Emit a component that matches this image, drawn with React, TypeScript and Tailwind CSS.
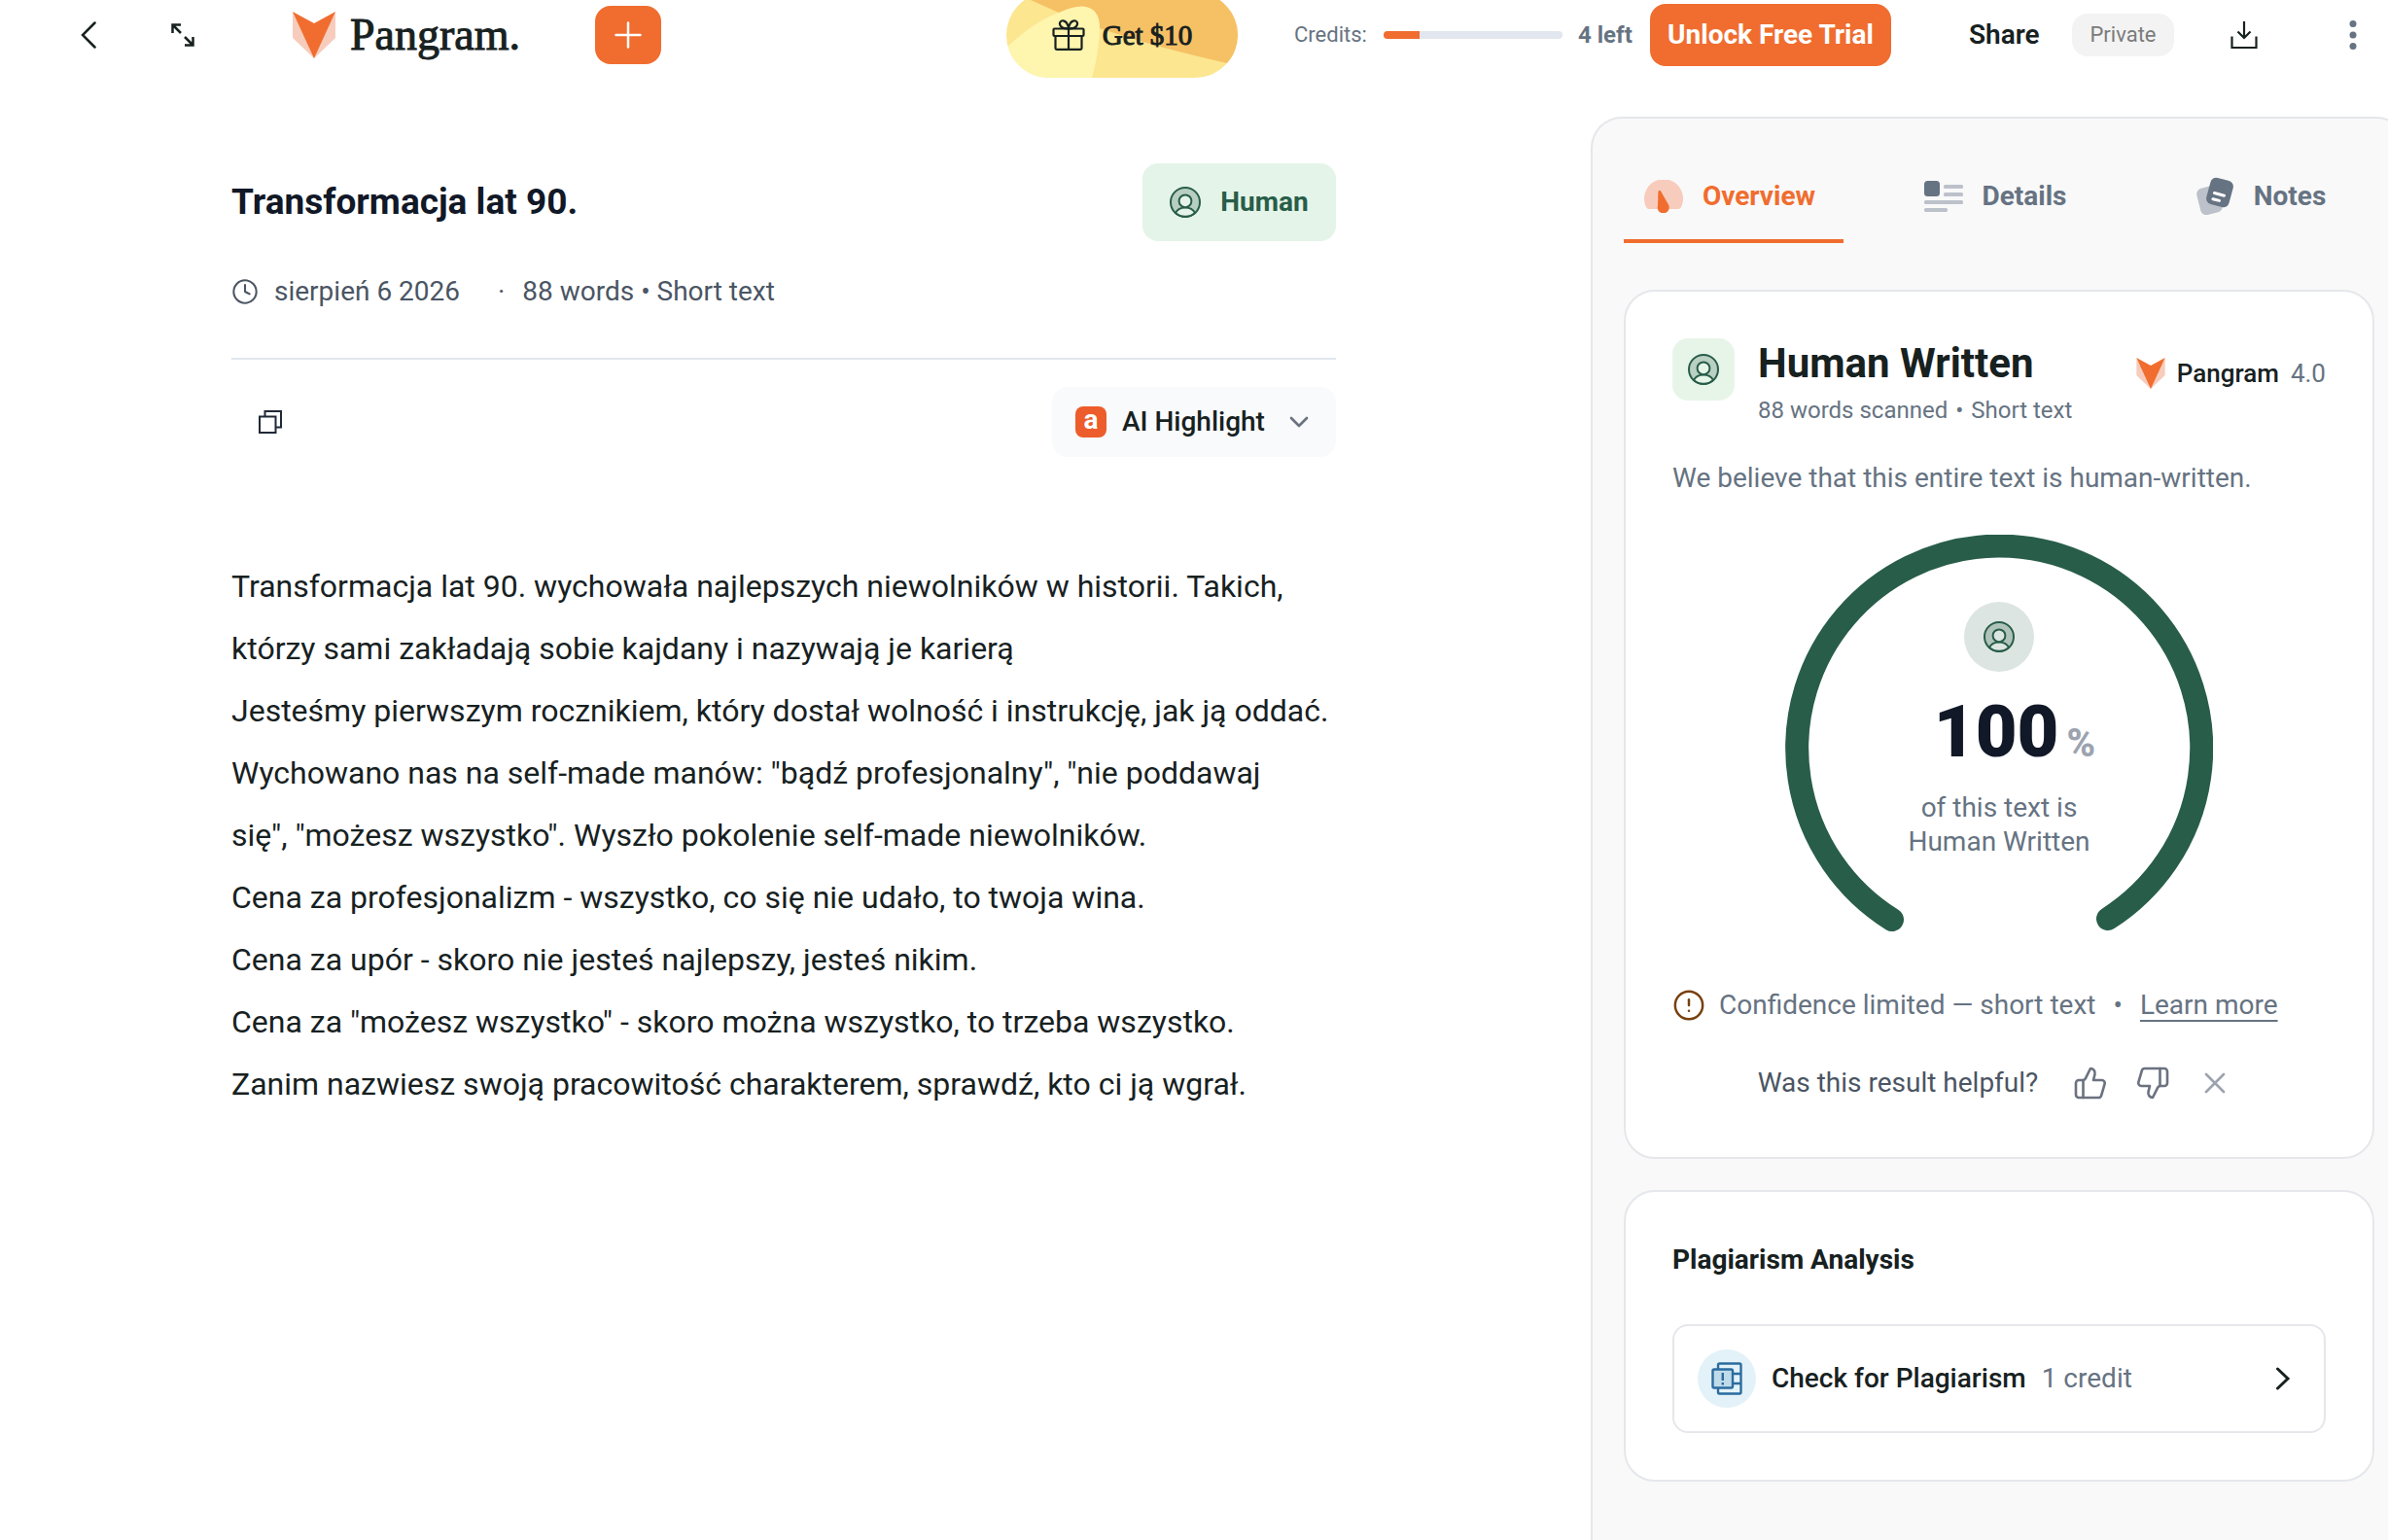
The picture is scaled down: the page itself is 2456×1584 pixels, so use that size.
/**
 * Scan result page: top bar, analysed document on the left,
 * detection report panel on the right.
 */
import type { ReactNode } from 'react'
import { ChevronDown, CircleAlert, Clock, ThumbsDown, ThumbsUp, X } from 'lucide-react'

const DOCUMENT_LINES = [
  'Transformacja lat 90. wychowała najlepszych niewolników w historii. Takich,',
  'którzy sami zakładają sobie kajdany i nazywają je karierą',
  'Jesteśmy pierwszym rocznikiem, który dostał wolność i instrukcję, jak ją oddać.',
  'Wychowano nas na self-made manów: "bądź profesjonalny", "nie poddawaj',
  'się", "możesz wszystko". Wyszło pokolenie self-made niewolników.',
  'Cena za profesjonalizm - wszystko, co się nie udało, to twoja wina.',
  'Cena za upór - skoro nie jesteś najlepszy, jesteś nikim.',
  'Cena za "możesz wszystko" - skoro można wszystko, to trzeba wszystko.',
  'Zanim nazwiesz swoją pracowitość charakterem, sprawdź, kto ci ją wgrał.',
]

function FoxLogo({ className }: { className?: string }) {
  return (
    <svg viewBox="0 0 44 48" className={className} aria-hidden="true">
      <path d="M0 0V27L22 48L44 27V0L22 40Z" fill="#f7ccbc" />
      <path d="M0 0L22 12L44 0L22 48Z" fill="#f06d2f" />
    </svg>
  )
}

/** Person in a circle. `ground` is the colour behind it, used for head and shoulders. */
function HumanIcon({ ground }: { ground: string }) {
  return (
    <svg viewBox="0 0 32 32" className="size-8 shrink-0" fill="none" stroke="#285d49" strokeWidth="2" aria-hidden="true">
      <circle cx="16" cy="16" r="15" fill="#285d49" fillOpacity="0.24" />
      <path d="M6 27C8 23 12 21.4 16 21.4S24 23 26 27A15 15 0 0 1 6 27Z" fill={ground} />
      <circle cx="16" cy="14.8" r="6.4" fill={ground} />
    </svg>
  )
}

function GiftIcon() {
  return (
    <svg viewBox="0 0 34 32" className="h-8 w-[34px]" fill="none" stroke="#17211f" strokeWidth="2.2" strokeLinejoin="round" strokeLinecap="round" aria-hidden="true">
      <rect x="1.5" y="9.5" width="31" height="7.5" rx="1" />
      <path d="M3.5 17V29.5Q3.5 30.8 4.8 30.8H29.2Q30.5 30.8 30.5 29.5V17M17 9.5V30.8" />
      <path d="M17 9.2C15 9.4 10.5 9 9 7C6.5 3.5 9 1 11.5 1.3C15 1.8 16.5 6 17 9.2C17.5 6 19 1.8 22.5 1.3C25 1 27.5 3.5 25 7C23.5 9 19 9.4 17 9.2Z" />
    </svg>
  )
}

function DownloadIcon() {
  return (
    <svg viewBox="0 0 28 30" className="h-[30px] w-7" fill="none" stroke="#17211f" strokeWidth="2.2" aria-hidden="true">
      <path d="M14 1V18M7.5 11.5L14 18L20.5 11.5" />
      <path d="M1.5 16.5V28H26.5V16.5" />
    </svg>
  )
}

function OverviewIcon() {
  return (
    <svg viewBox="0 0 40 34" className="h-[34px] w-10" aria-hidden="true">
      <path d="M5 30Q3 30 2 28A20 20 0 1 1 38 28Q37 30 35 30Z" fill="#f7ccbc" />
      <path d="M14.4 12.5Q15.2 9.5 17.3 12L24.8 25.2A6 6 0 1 1 14 26.5Z" fill="#f06d2f" />
    </svg>
  )
}

function DetailsIcon() {
  return (
    <svg viewBox="0 0 40 32" className="h-8 w-10" fill="#bcc1ca" aria-hidden="true">
      <rect width="16" height="16" rx="3.5" fill="#667382" />
      <rect x="20" y="4" width="20" height="4" rx="1.5" />
      <rect x="20" y="12" width="20" height="4" rx="1.5" />
      <rect y="20" width="40" height="4" rx="1.5" />
      <rect y="28" width="24" height="4" rx="1.5" />
    </svg>
  )
}

function NotesIcon() {
  return (
    <svg viewBox="0 0 40 40" className="size-10" aria-hidden="true">
      <rect x="3" y="10" width="23" height="28" rx="6" fill="#bcc1ca" transform="rotate(-14 14.5 24)" />
      <rect x="13" y="2" width="24" height="28" rx="6" fill="#667382" transform="rotate(15 25 16)" />
      <path d="M19.5 16.5L29.5 19.2M18 22.7L24.5 24.4" stroke="#fff" strokeWidth="3" strokeLinecap="round" />
    </svg>
  )
}

function PlagiarismIcon() {
  return (
    <svg viewBox="0 0 32 34" className="h-[34px] w-8" fill="none" stroke="#2b6c9f" strokeWidth="2.4" strokeLinejoin="round" aria-hidden="true">
      <path d="M7 8V3Q7 1.5 8.5 1.5H29Q30.5 1.5 30.5 3V31Q30.5 32.5 29 32.5H8.5Q7 32.5 7 31V26" />
      <path d="M22 12H30.5M22 22H30.5" />
      <rect x="1.5" y="7.5" width="20.5" height="19" rx="1.5" fill="#bfdbe9" />
      <path d="M11.8 11V19M11.8 21V23.5" />
    </svg>
  )
}

function PromoButton() {
  return (
    <button className="relative flex h-[88px] w-[238px] shrink-0 items-center justify-center gap-[18px] overflow-hidden rounded-full">
      <svg viewBox="0 0 238 88" className="absolute inset-0 size-full" aria-hidden="true">
        <rect width="238" height="88" fill="#fce690" />
        <path d="M10 0L25 8L54 21L96 37Q125 47 162 57Q192 65 227 73L238 60V0Z" fill="#f6c065" />
        <path d="M0 57Q30 29 54 21Q72 13 82 15Q95 18 96 34Q96 60 88 88H0Z" fill="#fef5ae" />
      </svg>
      <span className="relative"><GiftIcon /></span>
      <span className="relative font-['Liberation_Serif',serif] text-[29px] [-webkit-text-stroke:1px]">Get $10</span>
    </button>
  )
}

function TopBar() {
  return (
    <header className="flex h-[72px] items-center text-[28px] leading-9">
      <button aria-label="Back" className="ml-[83px]">
        <svg viewBox="0 0 16 28" className="h-7 w-4" fill="none" stroke="#17211f" strokeWidth="2.5" strokeLinecap="round">
          <path d="M14.5 1.5L2 14L14.5 26.5" />
        </svg>
      </button>
      <button aria-label="Expand" className="ml-[77px]">
        <svg viewBox="0 0 24 24" className="size-6" fill="none" stroke="#17211f" strokeWidth="2.5">
          <path d="M1.5 10V1.5H10M1.5 1.5L10 10M14 14L22.5 22.5M22.5 14V22.5H14" />
        </svg>
      </button>
      <a href="#" className="ml-[101px] flex w-[234px] items-center gap-[15px] font-['Liberation_Serif',serif] text-[46px] leading-[48px] [-webkit-text-stroke:1px]">
        <FoxLogo className="h-12 w-11 shrink-0" />
        Pangram.
      </a>
      <button aria-label="New scan" className="ml-[77px] flex h-[60px] w-[68px] items-center justify-center rounded-2xl bg-[#f06d2f]">
        <svg viewBox="0 0 28 28" className="size-7" stroke="#fff" strokeWidth="2.5" strokeLinecap="round">
          <path d="M14 1.5V26.5M1.5 14H26.5" />
        </svg>
      </button>

      <div className="ml-auto flex shrink-0 items-center">
        <PromoButton />
        <div className="ml-[58px] flex items-center text-[22px] text-[#667382]">
          <span id="credits" className="w-[92px]">Credits:</span>
          <div
            role="progressbar"
            aria-labelledby="credits"
            aria-valuenow={4}
            className="h-2 w-[184px] overflow-hidden rounded-full bg-[#e2e6ee]"
          >
            <div className="h-full w-1/5 bg-[#f06d2f]" />
          </div>
          <span className="ml-4 w-[74px] text-2xl font-bold">4 left</span>
        </div>
        <button className="h-16 w-[248px] rounded-2xl bg-[#f06d2f] font-bold text-white">Unlock Free Trial</button>
        <button className="ml-20 w-[106px] text-left font-semibold">Share</button>
        <span className="flex h-11 w-[105px] items-center justify-center rounded-2xl bg-[#f3f3f3] text-[22px] text-[#7b7b7b]">
          Private
        </span>
        <button aria-label="Download" className="ml-[58px]"><DownloadIcon /></button>
        <button aria-label="More" className="mr-8 ml-[94px]">
          <svg viewBox="0 0 8 32" className="h-8 w-2" fill="#667382">
            <circle cx="4" cy="4.5" r="3.5" />
            <circle cx="4" cy="16" r="3.5" />
            <circle cx="4" cy="27.5" r="3.5" />
          </svg>
        </button>
      </div>
    </header>
  )
}

function DocumentView() {
  return (
    <main className="flex-1 pt-12 pr-[262px] pl-[238px] text-[28px] leading-9">
      <div className="flex h-20 items-center justify-between">
        <h1 className="text-[37px] font-bold text-[#111827]">Transformacja lat 90.</h1>
        <span className="flex h-20 w-[199px] items-center justify-center gap-5 rounded-2xl bg-[#e4f4e8] font-bold text-[#285d49]">
          <HumanIcon ground="#e4f4e8" />
          Human
        </span>
      </div>
      <div className="mt-[34px] flex items-center text-[#4b5563]">
        <Clock size={28} strokeWidth={1.75} />
        <span className="ml-4 w-[230px]">sierpień 6 2026</span>
        <span className="mr-[18px]">·</span>
        <span>88 words • Short text</span>
      </div>
      <div className="mt-[50px] flex items-center justify-between border-t-2 border-[#e2e6ee] pt-7">
        <button aria-label="Copy" className="ml-7">
          <svg viewBox="0 0 24 24" className="size-6" fill="none" stroke="#1f2937" strokeWidth="2">
            <path d="M6.5 6V1H23V17.5H18" />
            <rect x="1" y="6.5" width="16.5" height="16.5" />
          </svg>
        </button>
        <button aria-haspopup="menu" className="flex h-[72px] w-[292px] items-center rounded-2xl bg-[#f9fafc] pr-[22px] pl-6 font-medium">
          <span className="mr-4 flex size-8 items-center justify-center rounded-lg bg-[#ed5c2b] pb-1 text-[28px] font-bold text-white">a</span>
          AI Highlight
          <ChevronDown size={32} strokeWidth={2} className="ml-auto text-[#6b7280]" />
        </button>
      </div>
      <div className="mt-[101px] text-[32px] leading-16 whitespace-nowrap">
        {DOCUMENT_LINES.map((line) => (
          <p key={line}>{line}</p>
        ))}
      </div>
    </main>
  )
}

function Tab({ icon, label, active }: { icon: ReactNode; label: string; active?: boolean }) {
  return (
    <button
      role="tab"
      aria-selected={!!active}
      className={
        'flex h-24 w-[226px] items-center justify-center gap-5 pr-2 font-bold ' +
        (active ? 'text-[#f06d2f] shadow-[inset_0_-4px_0_#f06d2f]' : 'text-[#667382]')
      }
    >
      {icon}
      {label}
    </button>
  )
}

function Card({ children }: { children: ReactNode }) {
  return <section className="rounded-[32px] border-2 border-[#e5e7eb] bg-white p-12">{children}</section>
}

function ScoreGauge() {
  return (
    <div className="relative mx-auto mt-10 h-[440px] w-[440px]">
      <svg viewBox="0 0 440 440" className="absolute inset-0 size-full" fill="none" aria-hidden="true">
        <path d="M110 396A208 208 0 1 1 332 395" stroke="#285d49" strokeWidth="24" strokeLinecap="round" />
      </svg>
      <div className="relative flex flex-col items-center pt-[69px] text-[#667382]">
        <span className="flex size-[72px] items-center justify-center rounded-full bg-[#dce5e1]">
          <HumanIcon ground="#dce5e1" />
        </span>
        <div className="mt-6 flex items-baseline gap-2 pl-8 leading-[76px]">
          <span className="text-[74px] font-black text-[#111827]">100</span>
          <span className="text-[40px] font-extrabold text-[#9ca3af]">%</span>
        </div>
        <p className="mt-2.5 w-60 text-center leading-[35px]">of this text is Human Written</p>
      </div>
    </div>
  )
}

function ResultCard() {
  return (
    <Card>
      <div className="flex">
        <span className="flex size-16 items-center justify-center rounded-2xl bg-[#e7f5e9]">
          <HumanIcon ground="#e7f5e9" />
        </span>
        <div className="ml-6">
          <h2 className="text-[42px] leading-[52px] font-bold">Human Written</h2>
          <p className="mt-1 text-2xl leading-9 text-[#667382]">
            88 words scanned<span className="mx-2">•</span>Short text
          </p>
        </div>
        <p className="mt-[18px] ml-auto flex h-9 items-center text-[26px] font-medium">
          <FoxLogo className="mr-3 h-8 w-[30px]" />
          Pangram
          <span className="ml-3 font-normal text-[#667382]">4.0</span>
        </p>
      </div>
      <p className="mt-[34px] text-[#667382]">We believe that this entire text is human-written.</p>
      <ScoreGauge />
      <p className="mt-[26px] flex items-center text-[#667382]">
        <CircleAlert size={34} strokeWidth={1.75} className="mr-3.5 text-[#78400f]" />
        Confidence limited — short text
        <span className="mx-[18px]">•</span>
        <a href="#" className="underline decoration-2 underline-offset-[6px]">Learn more</a>
      </p>
      <div className="mt-11 flex items-center justify-center pr-2 pb-2.5 text-[#4b5563]">
        Was this result helpful?
        <button aria-label="Helpful" className="ml-9 text-[#6b7280]"><ThumbsUp size={36} strokeWidth={1.75} /></button>
        <button aria-label="Not helpful" className="ml-7 text-[#6b7280]"><ThumbsDown size={36} strokeWidth={1.75} /></button>
        <button aria-label="Dismiss" className="ml-7 text-[#9ca3af]"><X size={36} strokeWidth={1.75} /></button>
      </div>
    </Card>
  )
}

function PlagiarismCard() {
  return (
    <Card>
      <h3 className="pt-1 font-bold">Plagiarism Analysis</h3>
      <button className="mt-12 flex h-28 w-full items-center rounded-2xl border-2 border-[#e5e7eb] px-6">
        <span className="mr-4 flex size-[60px] items-center justify-center rounded-full bg-[#e3f2f8]">
          <PlagiarismIcon />
        </span>
        <span className="font-medium">Check for Plagiarism</span>
        <span className="ml-4 text-[#667382]">1 credit</span>
        <svg viewBox="0 0 16 24" className="mr-2.5 ml-auto h-6 w-4" fill="none" stroke="#17211f" strokeWidth="3" strokeLinecap="round">
          <path d="M2.5 2L13 12L2.5 22" />
        </svg>
      </button>
    </Card>
  )
}

function ReportPanel() {
  return (
    <aside className="-mr-5 w-[840px] shrink-0 rounded-t-[32px] border-2 border-b-0 border-[#e5e7eb] bg-[#f9f9f9] p-8 text-[28px] leading-9">
      <div role="tablist" className="flex justify-between">
        <Tab icon={<OverviewIcon />} label="Overview" active />
        <Tab icon={<DetailsIcon />} label="Details" />
        <Tab icon={<NotesIcon />} label="Notes" />
      </div>
      <div className="mt-12 flex flex-col gap-8">
        <ResultCard />
        <PlagiarismCard />
      </div>
    </aside>
  )
}

export default function App() {
  return (
    <div className="flex min-h-screen flex-col overflow-hidden bg-white font-[Roboto,sans-serif] text-[#17211f]">
      <TopBar />
      <div className="mt-12 flex flex-1">
        <DocumentView />
        <ReportPanel />
      </div>
    </div>
  )
}
